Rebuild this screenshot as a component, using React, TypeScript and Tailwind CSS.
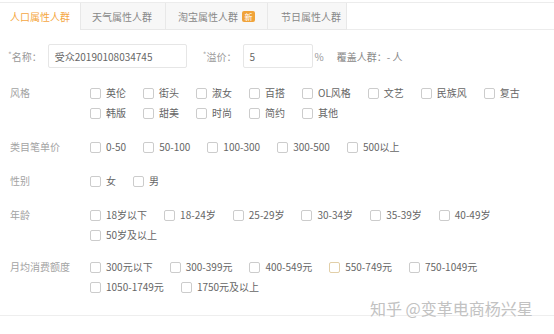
import React from "react";

const font = { fontFamily: '"Noto Sans CJK SC", "Noto Sans", sans-serif' };

function Opt({ label, hover }: { label: string; hover?: boolean }) {
  return (
    <div className="flex items-center h-[20px] mr-[17px]">
      <span
        className={
          "w-[11px] h-[11px] rounded-[2px] border bg-white mr-[5px] " +
          (hover ? "border-[#e2cfa8]" : "border-[#cccccc]")
        }
      />
      <span className="text-[10px] text-[#666] leading-[20px]">{label}</span>
    </div>
  );
}

function Group({ label, items, hoverIdx, mb }: { label: string; items: string[]; hoverIdx?: number; mb: string }) {
  return (
    <div className={"flex " + mb}>
      <div className="w-[90px] pl-[10px] text-[10px] leading-[20px] text-[#a3a3a3]">{label}</div>
      <div className="flex flex-wrap w-[452px]">
        {items.map((t, i) => (
          <Opt key={t} label={t} hover={i === hoverIdx} />
        ))}
      </div>
    </div>
  );
}

export default function App() {
  return (
    <div className="w-[554px] h-[334px] bg-white relative overflow-hidden" style={font}>
      <div className="h-[3px] border-b border-[#ececec]" />
      <div className="flex h-[27px] text-[10px]">
        <div className="w-[80px] bg-white flex items-center pl-[10px] text-[#f5a742]">人口属性人群</div>
        <div className="w-[85px] bg-[#f7f7f7] border-l border-b border-[#e8e8e8] flex items-center pl-[11px] text-[#888]">天气属性人群</div>
        <div className="w-[102px] bg-[#f7f7f7] border-l border-b border-[#e8e8e8] flex items-center pl-[12px] text-[#888]">
          淘宝属性人群
          <span className="ml-[4px] w-[13px] h-[11px] rounded-[2px] bg-[#f0a33a] text-white text-[8px] leading-[11px] flex items-center justify-center">新</span>
        </div>
        <div className="w-[80px] bg-[#f7f7f7] border-l border-r border-b border-[#e8e8e8] flex items-center pl-[13px] text-[#888]">节日属性人群</div>
        <div className="flex-1 border-b border-[#ececec]" />
      </div>

      <div className="flex items-center mt-[14px] h-[24px] text-[10px]">
        <span className="ml-[8px] text-[#999]"><span className="text-[8px] text-[#aaa] align-top">*</span>名称：</span>
        <div className="ml-[6px] w-[139px] h-[24px] border border-[#e6e6e6] rounded-[2px] flex items-center pl-[6px] text-[#666]">受众20190108034745</div>
        <span className="ml-[16px] text-[#999]"><span className="text-[8px] text-[#aaa] align-top">*</span>溢价：</span>
        <div className="ml-[6px] w-[70px] h-[24px] border border-[#e6e6e6] rounded-[2px] flex items-center pl-[6px] text-[#666]">5</div>
        <span className="ml-[2px] text-[#999]">%</span>
        <span className="ml-[13px] text-[#888]">覆盖人群：- 人</span>
      </div>

      <div className="mt-[15px]">
        <Group mb="mb-[14px]" label="风格" items={["英伦", "街头", "淑女", "百搭", "OL风格", "文艺", "民族风", "复古", "韩版", "甜美", "时尚", "简约", "其他"]} />
        <Group mb="mb-[14px]" label="类目笔单价" items={["0-50", "50-100", "100-300", "300-500", "500以上"]} />
        <Group mb="mb-[14px]" label="性别" items={["女", "男"]} />
        <Group mb="mb-[12px]" label="年龄" items={["18岁以下", "18-24岁", "25-29岁", "30-34岁", "35-39岁", "40-49岁", "50岁及以上"]} />
        <Group mb="mb-0" label="月均消费额度" items={["300元以下", "300-399元", "400-549元", "550-749元", "750-1049元", "1050-1749元", "1750元及以上"]} hoverIdx={3} />
      </div>

      <div className="absolute left-0 right-0 top-[315px] border-t border-[#eeeeee]" />
      <div
        className="absolute left-[370px] top-[297px] text-[16px] leading-[22px] text-[#c2c2c2] whitespace-nowrap"
        style={{ textShadow: "0 0 1px #fff, 0 0 1px #fff" }}
      >
        知乎 @变革电商杨兴星
      </div>
    </div>
  );
}
